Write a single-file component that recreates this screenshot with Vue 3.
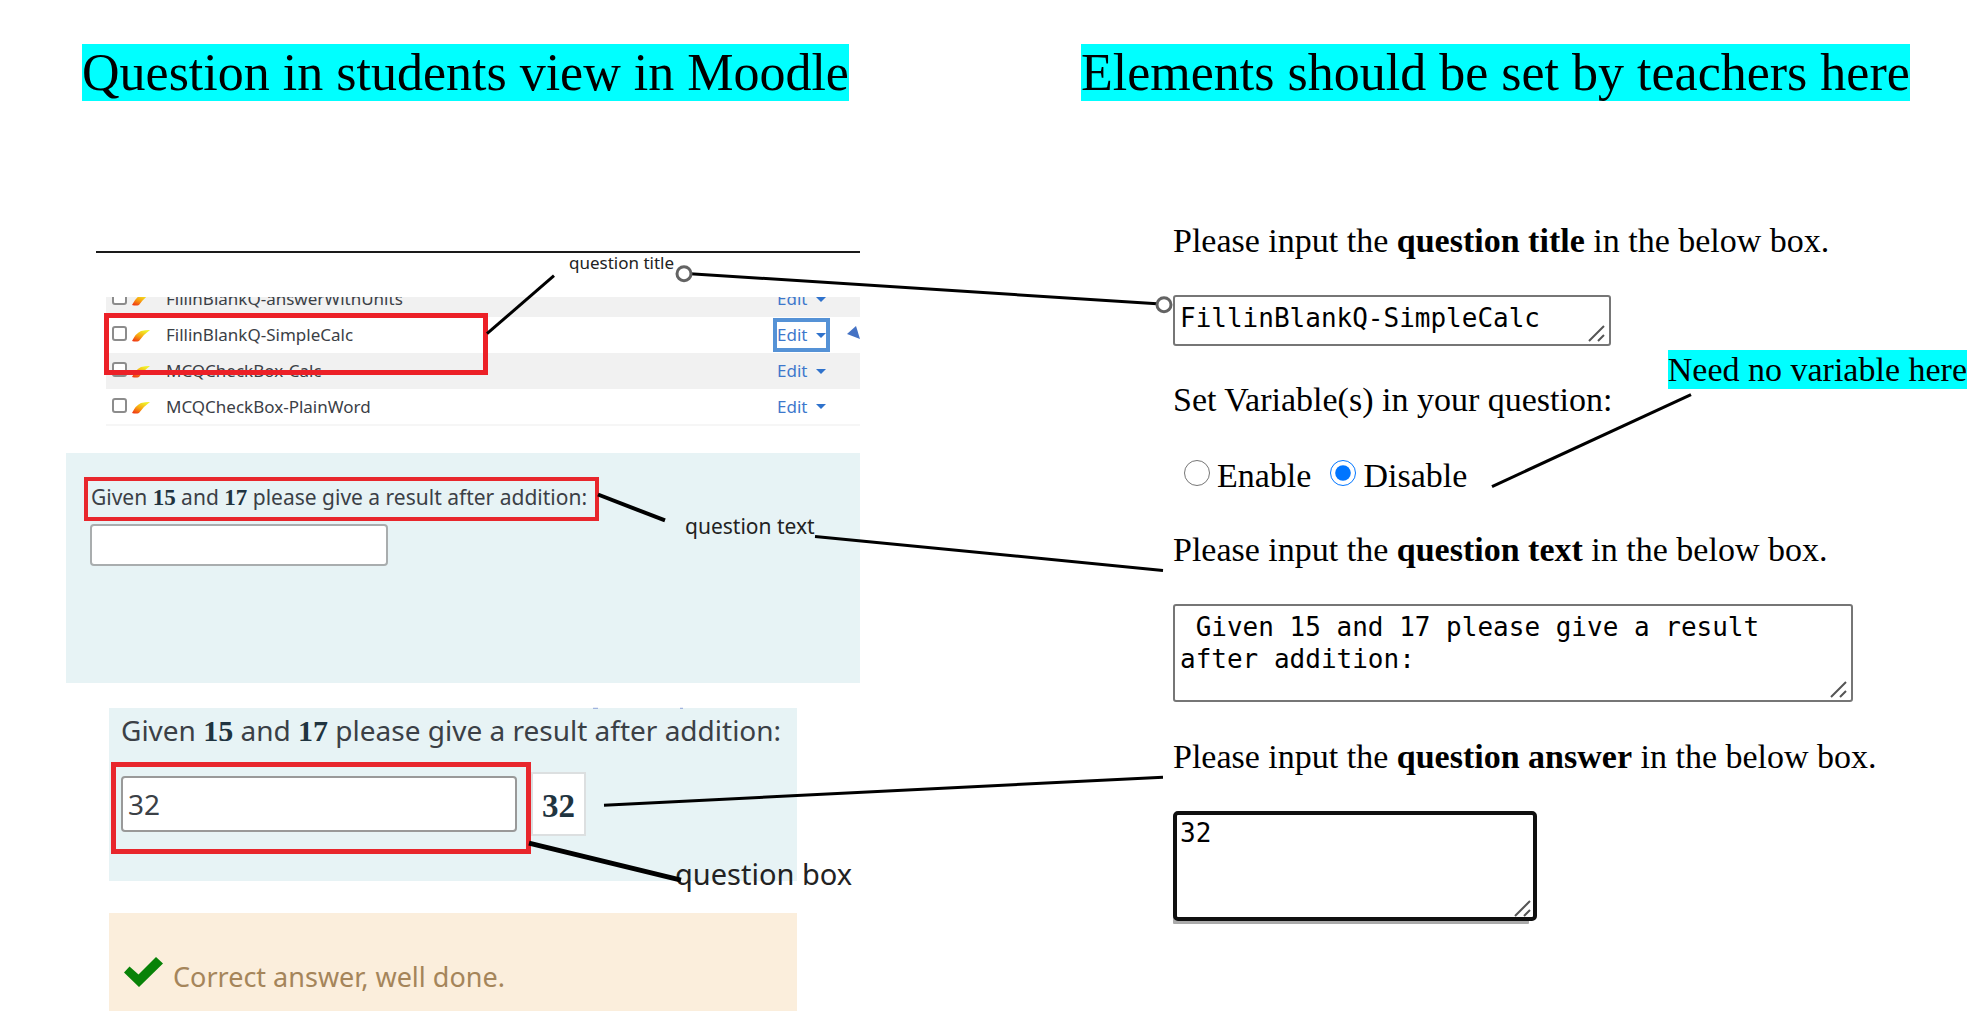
<script setup>
import { ref } from 'vue'

const questions = [
  { id: 'q1', name: 'FillinBlankQ-answerWithUnits', focused: false },
  { id: 'q2', name: 'FillinBlankQ-SimpleCalc', focused: true },
  { id: 'q3', name: 'MCQCheckBox-Calc', focused: false },
  { id: 'q4', name: 'MCQCheckBox-PlainWord', focused: false },
]

const title = ref('FillinBlankQ-SimpleCalc')
const text = ref(' Given 15 and 17 please give a result after addition:')
const answer = ref('32')
const response = ref('32')
const blank = ref('')
const variables = ref('disable')
</script>

<template>
  <main class="page">
    <section class="student">
      <h1><mark>Question in students view in Moodle</mark></h1>

      <div class="bank">
        <p class="caption small">question title</p>
        <div class="bank-list">
          <table>
            <tbody>
              <tr v-for="q in questions" :key="q.id">
                <td class="pick">
                  <input :id="q.id" type="checkbox" :aria-label="q.name" />
                  <svg class="leaf" viewBox="0 0 18 12" aria-hidden="true">
                    <defs>
                      <linearGradient :id="q.id + '-g'" x1="0" y1="1" x2="0.6" y2="0">
                        <stop offset="0.1" stop-color="#f03c14" />
                        <stop offset="0.5" stop-color="#f8a010" />
                        <stop offset="1" stop-color="#f0f028" />
                      </linearGradient>
                    </defs>
                    <path d="M0 11 Q4 3 9 1 Q13 0 18 0 Q12 4 7 11 Q4 12 0 11Z" :fill="`url(#${q.id}-g)`" />
                  </svg>
                </td>
                <td><label :for="q.id">{{ q.name }}</label></td>
                <td class="action">
                  <button type="button" :class="{ focused: q.focused }">Edit<i class="caret"></i></button>
                </td>
              </tr>
            </tbody>
          </table>
          <svg class="pointer" viewBox="0 0 13 13" aria-hidden="true"><path d="M9 0 13 13 0 8Z" fill="#4472c4" /></svg>
        </div>
        <div class="highlight"></div>
      </div>

      <div class="panel question">
        <p class="boxed">
          <label for="blank">Given <b>15</b> and <b>17</b> please give a result after addition:</label>
        </p>
        <input id="blank" v-model="blank" type="text" />
        <p class="caption medium">question text</p>
      </div>

      <div class="panel answered">
        <label for="response">Given <b>15</b> and <b>17</b> please give a result after addition:</label>
        <div class="answer-row">
          <div class="boxed"><input id="response" v-model="response" type="text" /></div>
          <output for="response">32</output>
        </div>
        <p class="caption large">question box</p>
      </div>

      <div class="panel feedback">
        <svg viewBox="0 0 39 30" aria-hidden="true"><path d="M0 15.500 5.500 9.500 14.500 17.500 32 0 39 6.500 15 30Z" fill="#088208" /></svg>
        <p>Correct answer, well done.</p>
      </div>
    </section>

    <section class="teacher">
      <h1><mark>Elements should be set by teachers here</mark></h1>

      <form @submit.prevent>
        <label for="title">Please input the <b>question title</b> in the below box.</label>
        <div class="field">
          <textarea id="title" v-model="title" class="title-box" spellcheck="false"></textarea>
          <svg class="grip" viewBox="0 0 17 17" aria-hidden="true"><path d="M1 16 16 1M10 16 16 10" /></svg>
        </div>

        <fieldset>
          <legend>Set Variable(s) in your question:</legend>
          <div class="options">
            <input id="enable" v-model="variables" type="radio" name="variables" value="enable" />
            <label for="enable">Enable</label>
            <input id="disable" v-model="variables" type="radio" name="variables" value="disable" />
            <label for="disable">Disable</label>
          </div>
        </fieldset>

        <label for="text">Please input the <b>question text</b> in the below box.</label>
        <div class="field">
          <textarea id="text" v-model="text" class="text-box" spellcheck="false"></textarea>
          <svg class="grip" viewBox="0 0 17 17" aria-hidden="true"><path d="M1 16 16 1M10 16 16 10" /></svg>
        </div>

        <label for="answer">Please input the <b>question answer</b> in the below box.</label>
        <div class="field">
          <textarea id="answer" v-model="answer" class="answer-box" spellcheck="false"></textarea>
          <svg class="grip" viewBox="0 0 17 17" aria-hidden="true"><path d="M1 16 16 1M10 16 16 10" /></svg>
        </div>
      </form>

      <p class="note"><mark>Need no variable here</mark></p>
    </section>

    <svg class="connectors" viewBox="0 0 1972 1012" preserveAspectRatio="none" aria-hidden="true">
      <g stroke="#000" fill="none">
        <path d="M487 334 554 276" stroke-width="3" />
        <path d="M690 274 1157 304" stroke-width="3" />
        <path d="M598 495 665 521" stroke-width="4" />
        <path d="M815 537 1163 571" stroke-width="3" />
        <path d="M604 806 1163 778" stroke-width="3" />
        <path d="M529 844 681 881" stroke-width="5" />
        <path d="M1492 487 1691 395" stroke-width="3" />
        <g stroke="#636363" stroke-width="3" fill="#fff">
          <circle cx="684" cy="274" r="7" />
          <circle cx="1164" cy="305" r="7" />
        </g>
        <path d="M593 709h5M680 709h3" stroke="#8fa3d8" stroke-width="1" />
      </g>
    </svg>
  </main>
</template>

<style>
body {
  margin: 0;
  background: #fff;
}
</style>

<style scoped>
.page {
  position: relative;
  display: grid;
  grid-template-columns: minmax(0, 1081fr) minmax(0, 891fr);
  overflow: hidden;
  font-family: "Noto Sans", "Open Sans", sans-serif;
  color: #3b4046;
}
h1, p {
  margin: 0;
  font-weight: 400;
}
input, button, textarea {
  box-sizing: border-box;
  margin: 0;
  font: inherit;
  color: inherit;
}
mark {
  display: inline-block;
  background: #00ffff;
  color: #000;
  white-space: nowrap;
}
h1 {
  font-family: "Liberation Serif", serif;
  font-size: 52px;
  line-height: 57px;
}
.connectors {
  position: absolute;
  inset: 0;
  width: 100%;
  height: 100%;
  pointer-events: none;
}
.caption {
  color: #222;
  white-space: nowrap;
}
.small { font-size: 17px; }
.medium { font-size: 21px; }
.large { font-size: 29px; }

/* Student side */
.student {
  padding: 44px 221px 0 66px;
}
.student h1 {
  padding-left: 16px;
}
.bank {
  position: relative;
  margin: 150px 0 0 30px;
  border-top: 2px solid #1a1a1a;
  font-size: 17px;
}
.bank .caption {
  height: 44px;
  padding-left: 473px;
  line-height: 20px;
}
.bank-list {
  position: relative;
  margin-left: 10px;
  overflow: hidden;
}
table {
  width: 100%;
  margin-top: -16px;
  border-collapse: collapse;
  border-bottom: 2px solid #f6f6f6;
}
tr {
  height: 36px;
}
tr:nth-child(odd) {
  background: #f1f1f1;
}
td {
  padding: 0;
  line-height: 24px;
}
.pick {
  width: 60px;
}
.pick input {
  appearance: none;
  width: 15px;
  height: 15px;
  margin: 0 5px 5px 6px;
  border: 2px solid #8c8c8c;
  border-radius: 3px;
  background: #fff;
  vertical-align: middle;
}
.leaf {
  width: 18px;
  height: 12px;
  vertical-align: middle;
}
.action {
  width: 83px;
}
.action button {
  display: flex;
  align-items: center;
  gap: 9px;
  height: 34px;
  padding: 0;
  border: 0 solid #5592d6;
  background: none;
  color: #3d78cc;
}
.action button.focused {
  margin-left: -4px;
  border-width: 4px;
}
.caret {
  border: 5px solid transparent;
  border-top-color: #2f72cc;
  border-bottom: 0;
}
.pointer {
  position: absolute;
  top: 29px;
  right: 0;
  width: 13px;
  height: 13px;
}
.highlight {
  position: absolute;
  top: 60px;
  left: 8px;
  box-sizing: border-box;
  width: 384px;
  height: 62px;
  border: 5px solid #ec2027;
}
.panel {
  position: relative;
  box-sizing: border-box;
  background: #e7f3f5;
}
.panel b, output {
  font-family: "Liberation Serif", serif;
  color: #1f3440;
}
.panel input {
  display: block;
  border: 2px solid #a9adae;
  border-radius: 4px;
  background: #fff;
}
.boxed {
  box-sizing: border-box;
  border: 4px solid #e8262c;
}
.question {
  height: 230px;
  margin-top: 27px;
  padding: 24px 0 0 18px;
  font-size: 21px;
}
.question .boxed {
  width: 515px;
  height: 44px;
  padding-left: 3px;
  line-height: 32px;
  white-space: nowrap;
}
.question b {
  font-size: 23px;
  line-height: 24px;
}
.question input {
  width: 298px;
  height: 42px;
  margin: 3px 0 0 6px;
}
.question .caption {
  position: absolute;
  top: 59px;
  left: 619px;
  line-height: 28px;
}
.answered {
  height: 173px;
  margin: 25px 63px 0 43px;
  padding: 2px 0 0 2px;
  font-size: 28px;
}
.answered > label {
  display: block;
  height: 52px;
  padding-left: 10px;
  line-height: 40px;
  white-space: nowrap;
}
.answered b {
  font-size: 30px;
  line-height: 32px;
}
.answer-row {
  display: flex;
  align-items: center;
}
.answered .boxed {
  width: 420px;
  height: 92px;
  padding: 9px 0 0 5px;
  border-width: 5px;
}
.answered input {
  width: 396px;
  height: 56px;
  padding: 0 5px;
  border-color: #999;
}
output {
  box-sizing: border-box;
  width: 55px;
  height: 64px;
  margin-bottom: 8px;
  border: 2px solid #dcdfe0;
  background: #fff;
  font-size: 33px;
  font-weight: 700;
  line-height: 64px;
  text-align: center;
}
.answered .caption {
  position: absolute;
  top: 146px;
  left: 566px;
  line-height: 40px;
}
.feedback {
  display: flex;
  align-items: center;
  gap: 10px;
  height: 98px;
  margin: 32px 63px 0 43px;
  padding: 30px 0 0 15px;
  background: #fbeedc;
  color: #a5855a;
  font-size: 27px;
}
.feedback svg {
  width: 39px;
  height: 30px;
  margin-bottom: 10px;
}
.feedback p {
  line-height: 40px;
}

/* Teacher side */
.teacher {
  position: relative;
  padding-top: 44px;
  color: #000;
  font-family: "Liberation Serif", serif;
}
form {
  display: flex;
  flex-direction: column;
  align-items: flex-start;
  margin: 121px 0 0 92px;
  font-size: 34px;
  line-height: 38px;
}
.field {
  position: relative;
  margin-top: 35px;
}
.grip {
  position: absolute;
  right: 6px;
  bottom: 4px;
  width: 17px;
  height: 17px;
  stroke: #555;
  stroke-width: 2;
  pointer-events: none;
}
textarea {
  display: block;
  padding: 5px 5px;
  border: 2px solid #767676;
  border-radius: 3px;
  background: #fff;
  font-family: "DejaVu Sans Mono", monospace;
  font-size: 26px;
  line-height: 32px;
  overflow: hidden;
  resize: none;
}
.title-box {
  width: 438px;
  height: 51px;
}
fieldset {
  margin: 0;
  padding: 0;
  border: 0;
}
legend {
  padding: 35px 0 0;
}
.options {
  display: flex;
  align-items: center;
  margin: 38px 0 36px 11px;
}
.options input {
  width: 26px;
  height: 26px;
  margin-bottom: 6px;
}
.options label {
  margin: 0 19px 0 7px;
}
.text-box {
  width: 680px;
  height: 98px;
}
.field + label {
  margin-top: 36px;
}
.answer-box {
  width: 364px;
  height: 110px;
  padding: 2px 3px;
  border: 4px solid #101010;
  border-radius: 5px;
  box-shadow: -4px 7px 0 -4px #aaa;
}
.note {
  position: absolute;
  top: 350px;
  right: 5px;
  font-size: 34px;
  line-height: 39px;
}
</style>
